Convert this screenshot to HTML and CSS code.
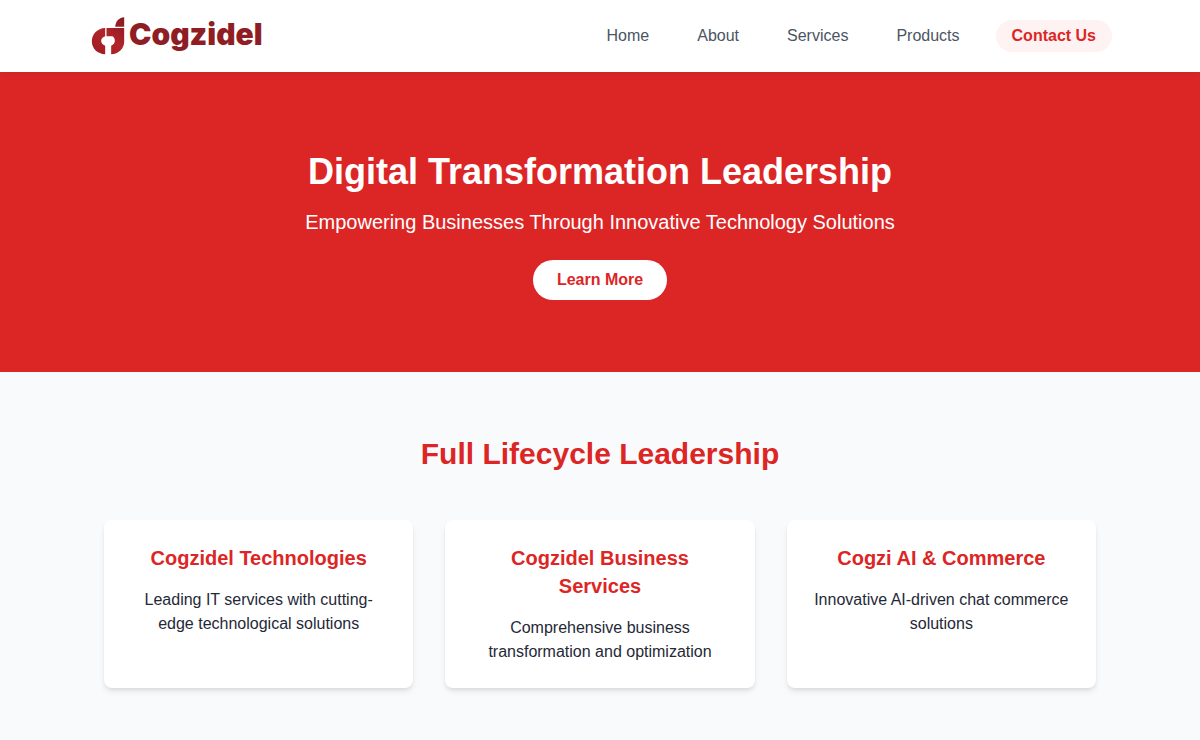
FILE: index.html
```html
<!DOCTYPE html>
<html lang="en">
<head>
    <meta charset="UTF-8">
    <meta name="viewport" content="width=device-width, initial-scale=1.0">
    <title>Cogzidel</title>
    <link rel="stylesheet" href="styles.css">
</head>
<body>
    <header class="header">
        <div class="header-inner">
            <a href="#" class="logo">
                <svg class="logo-mark" viewBox="0 0 99 114" aria-hidden="true">
                    <defs>
                        <linearGradient id="logo-red" gradientUnits="userSpaceOnUse" x1="0" y1="114" x2="99" y2="0">
                            <stop offset="0" stop-color="#9c1c23"/>
                            <stop offset="0.5" stop-color="#b0252a"/>
                            <stop offset="1" stop-color="#861a20"/>
                        </linearGradient>
                    </defs>
                    <g fill="url(#logo-red)">
                        <path d="M41 33C18 34 1 51 1 73s17 38 40 39V86c-8-3-12-9-12-15s5-11 12-13z"/>
                        <path d="M45 33h53v41c0 21-17 36-39 38V86c7-3 11-9 11-15 0-6-3-10-7-13H45z"/>
                        <path d="M71 29C72 13 83 2 98 1v28z"/>
                    </g>
                </svg>
                <span class="logo-text">Cogzidel</span>
            </a>
            <nav class="nav">
                <a href="#home">Home</a>
                <a href="#about">About</a>
                <a href="#services">Services</a>
                <a href="#products">Products</a>
                <a href="#contact" class="contact-link">Contact Us</a>
            </nav>
        </div>
    </header>

    <section class="hero" id="home">
        <h1>Digital Transformation Leadership</h1>
        <p>Empowering Businesses Through Innovative Technology Solutions</p>
        <a href="#services" class="hero-button">Learn More</a>
    </section>

    <section class="services" id="services">
        <h2>Full Lifecycle Leadership</h2>
        <div class="card-grid">
            <div class="card">
                <h3>Cogzidel Technologies</h3>
                <p>Leading IT services with cutting-edge technological solutions</p>
            </div>
            <div class="card">
                <h3>Cogzidel Business Services</h3>
                <p>Comprehensive business transformation and optimization</p>
            </div>
            <div class="card">
                <h3>Cogzi AI &amp; Commerce</h3>
                <p>Innovative AI-driven chat commerce solutions</p>
            </div>
        </div>
    </section>
</body>
</html>
```
FILE: styles.css
```css
* {
    box-sizing: border-box;
    margin: 0;
    padding: 0;
}

body {
    background-color: #f9fafb;
    color: #1f2937;
    font-family: "Liberation Sans", Arial, sans-serif;
    font-size: 16px;
    line-height: 24px;
}

a {
    text-decoration: none;
}

/* Header */
.header {
    position: relative;
    background-color: #fff;
    box-shadow: 0 4px 6px -1px rgba(0, 0, 0, 0.06);
}

.header-inner {
    display: flex;
    justify-content: space-between;
    align-items: center;
    max-width: 1024px;
    min-height: 72px;
    margin: 0 auto;
}

.logo {
    display: flex;
    align-items: center;
    gap: 4px;
    padding-left: 3px;
}

.logo-mark {
    width: 34px;
    height: 38px;
}

.logo-text {
    padding-bottom: 4px;
    color: #8f1d24;
    font-family: Inter, sans-serif;
    font-size: 30px;
    font-weight: 900;
    line-height: 32px;
}

.nav {
    display: flex;
    align-items: center;
    gap: 24px;
}

.nav a {
    padding: 4px 12px;
    color: #4b5563;
}

.nav .contact-link {
    padding: 4px 16px;
    border-radius: 999px;
    background-color: #fef2f2;
    color: #dc2626;
    font-weight: bold;
}

/* Hero */
.hero {
    padding: 80px 16px 72px;
    background-color: #dc2626;
    color: #fff;
    text-align: center;
}

.hero h1 {
    margin-bottom: 16px;
    font-size: 36px;
    line-height: 40px;
}

.hero p {
    margin-bottom: 24px;
    font-size: 20px;
    line-height: 28px;
}

.hero-button {
    display: inline-block;
    padding: 8px 24px;
    border-radius: 999px;
    background-color: #fff;
    color: #dc2626;
    font-weight: bold;
    vertical-align: top;
}

/* Services */
.services {
    max-width: 1024px;
    margin: 0 auto;
    padding: 64px 16px;
    text-align: center;
}

.services h2 {
    margin-bottom: 48px;
    color: #dc2626;
    font-size: 30px;
    line-height: 36px;
}

.card-grid {
    display: grid;
    grid-template-columns: repeat(3, 1fr);
    gap: 32px;
}

.card {
    padding: 24px;
    border-radius: 8px;
    background-color: #fff;
    box-shadow: 0 4px 6px -1px rgba(0, 0, 0, 0.1), 0 2px 4px -1px rgba(0, 0, 0, 0.06);
}

.card h3 {
    margin-bottom: 16px;
    color: #dc2626;
    font-size: 20px;
    line-height: 28px;
}
```
